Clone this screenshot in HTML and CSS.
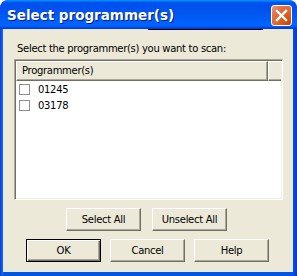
FILE: index.html
```html
<!DOCTYPE html>
<html>
<head>
<meta charset="utf-8">
<link rel="stylesheet" href="styles.css">
</head>
<body>
<div class="window">
  <div class="titlebar">
    <span class="title">Select programmer(s)</span>
    <span class="close">
      <svg width="13" height="13" viewBox="0 0 13 13"><path d="M2 2 L11 11 M11 2 L2 11" stroke="#fff" stroke-width="2.4" stroke-linecap="square"/></svg>
    </span>
  </div>
  <div class="client">
    <div class="artifact"></div>
    <div class="label">Select the programmer(s) you want to scan:</div>
    <div class="list">
      <div class="header">
        <div class="hcell">Programmer(s)</div>
        <div class="hrest"></div>
      </div>
      <div class="row"><span class="cb"></span><span class="rtext">01245</span></div>
      <div class="row"><span class="cb"></span><span class="rtext">03178</span></div>
    </div>
    <div class="btnrow sel">
      <div class="btn">Select All</div>
      <div class="btn">Unselect All</div>
    </div>
    <div class="btnrow main">
      <div class="btn default">OK</div>
      <div class="btn">Cancel</div>
      <div class="btn">Help</div>
    </div>
  </div>
</div>
</body>
</html>
```

FILE: styles.css
```css
html, body {
  margin: 0;
  padding: 0;
  background: #fff;
}
.window {
  width: 297px;
  height: 276px;
  box-sizing: border-box;
  display: flex;
  flex-direction: column;
  background: linear-gradient(to right, #0831D9 0, #166AEE 2px, #0055E5 4px, #0055E5 calc(100% - 4px), #0831D9 100%);
  border-radius: 8px 8px 0 0;
  overflow: hidden;
  font-family: "DejaVu Sans", Verdana, sans-serif;
  font-size: 10px;
  letter-spacing: -0.3px;
  color: #000;
}
.titlebar {
  height: 29px;
  flex: none;
  display: flex;
  align-items: center;
  padding: 0 5px 0 7px;
  background: linear-gradient(to bottom, #0997FF 0, #0053EE 9%, #0050EE 20%, #0058F0 50%, #0064FF 85%, #005BFF 92%, #003DD7 97%, #003DD7 100%);
  border-radius: 8px 8px 0 0;
}
.title {
  flex: 1;
  color: #fff;
  font-family: "DejaVu Sans", sans-serif;
  font-weight: bold;
  font-size: 13.5px;
  letter-spacing: 0;
  text-shadow: 1px 1px #0A1883;
  padding-top: 1px;
}
.close {
  width: 21px;
  height: 21px;
  box-sizing: border-box;
  border: 1px solid #fff;
  border-radius: 3px;
  background: radial-gradient(circle at 90% 90%, #CC4600 0, #DC6527 45%, #E3744C 75%, #F29E7E 100%);
  display: flex;
  align-items: center;
  justify-content: center;
  margin-top: 1px;
}
.close svg { display: block; }
.client {
  flex: 1;
  margin: 0 4px 4px 3px;
  background: #ECE9D8;
  display: flex;
  flex-direction: column;
}
.artifact {
  margin-left: 145px;
  width: 115px;
  height: 1px;
  background: #000;
}
.label {
  margin-top: 12px;
  padding-left: 14px;
  line-height: 13px;
  height: 13px;
}
.list {
  margin: 4px 0 0 11px;
  width: 269px;
  height: 141px;
  box-sizing: border-box;
  background: #fff;
  border-style: solid;
  border-width: 1px;
  border-color: #ACA899 #fff #fff #ACA899;
  box-shadow: inset 1px 1px #716F64, inset -1px -1px #F1EFE2;
  padding: 1px;
}
.header {
  display: flex;
  height: 20px;
}
.hcell, .hrest {
  box-sizing: border-box;
  background: #ECE9D8;
  border-top: 1px solid #fff;
  border-left: 1px solid #fff;
  border-right: 1px solid #716F64;
  border-bottom: 1px solid #716F64;
  box-shadow: inset -1px -1px #ACA899;
}
.hcell {
  width: 252px;
  padding-left: 5px;
  line-height: 18px;
}
.hrest { flex: 1; border-right: none; box-shadow: inset 0 -1px #ACA899; }
.row {
  display: flex;
  align-items: center;
  height: 16px;
  padding-left: 3px;
}
.cb {
  width: 11px;
  height: 11px;
  box-sizing: border-box;
  border: 1px solid #8E8F8F;
  background: #fff;
  margin-right: 8px;
}
.rtext { line-height: 13px; }
.btnrow {
  display: flex;
  margin-top: 8px;
  height: 23px;
}
.sel { padding-left: 63px; gap: 11px; }
.main { padding-left: 23px; gap: 9px; }
.btn {
  width: 75px;
  height: 23px;
  box-sizing: border-box;
  background: #ECE9D8;
  border-style: solid;
  border-width: 1px;
  border-color: #fff #716F64 #716F64 #fff;
  box-shadow: inset -1px -1px #ACA899;
  display: flex;
  align-items: center;
  justify-content: center;
}
.btn.default {
  border: 1px solid #000;
  box-shadow: inset 1px 1px #fff, inset -1px -1px #716F64, inset -2px -2px #ACA899;
}
```
